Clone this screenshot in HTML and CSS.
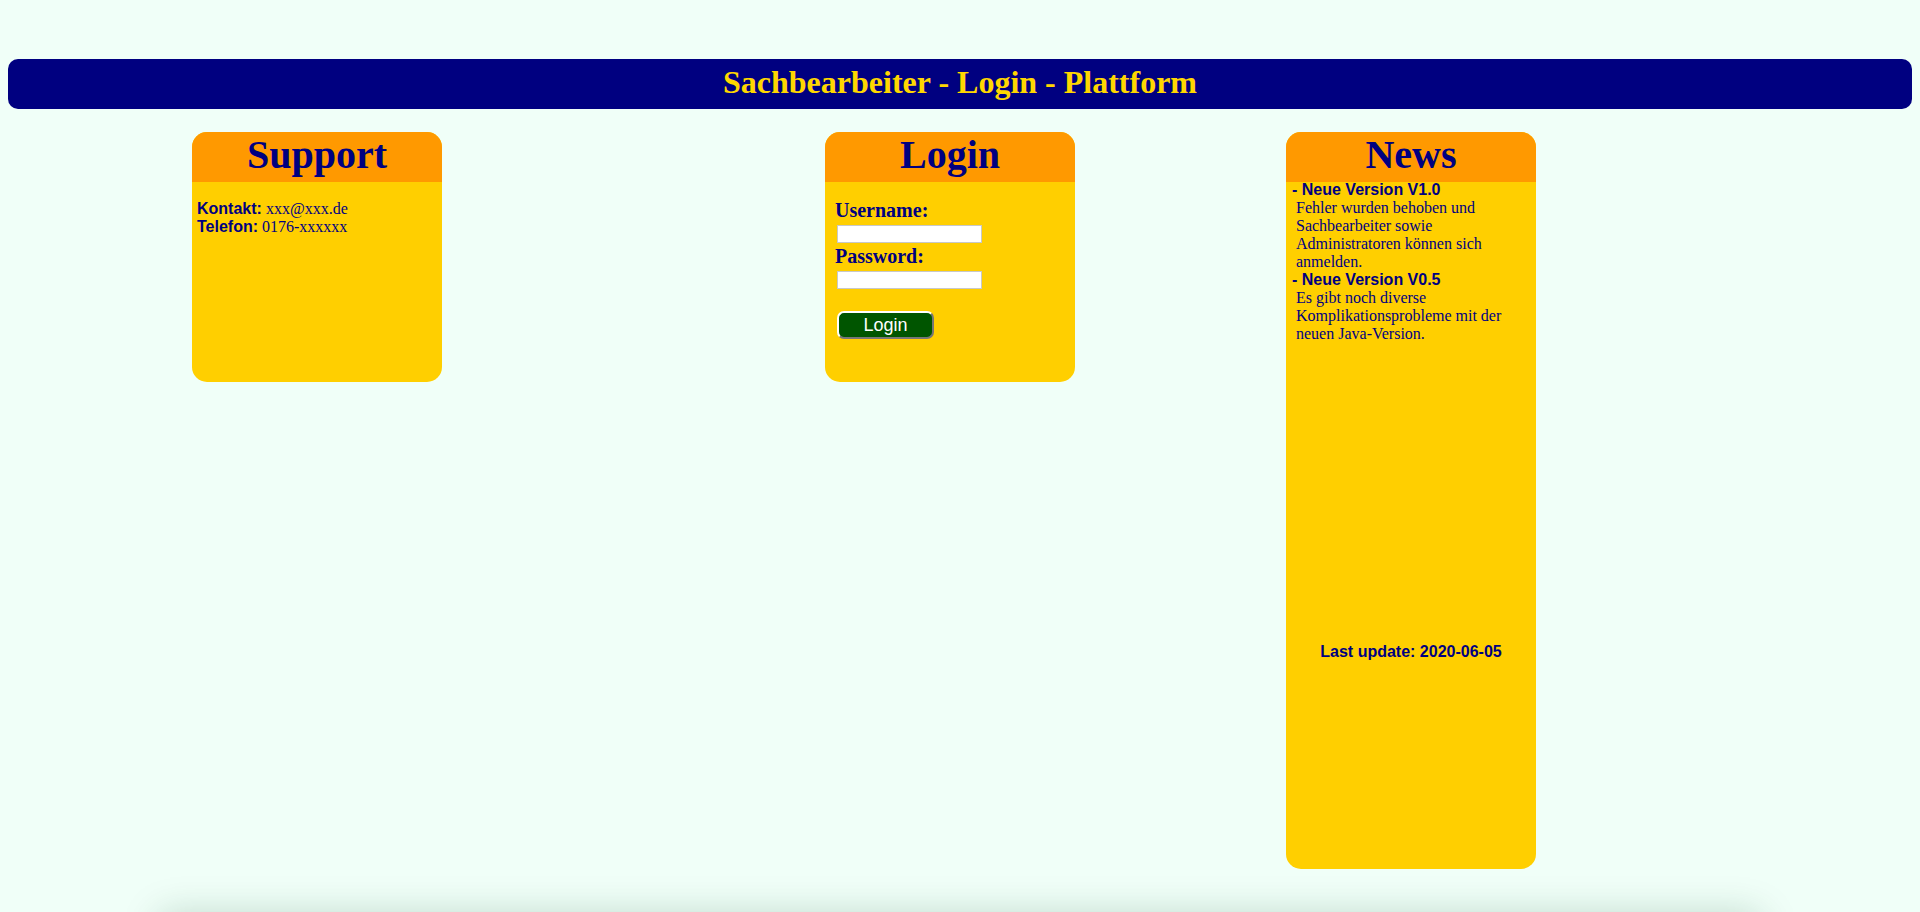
FILE: index.html
```html
<!DOCTYPE html>
<html lang="de">
<head>
<meta charset="utf-8">
<title>Sachbearbeiter - Login - Plattform</title>
<link rel="stylesheet" href="styles.css">
</head>
<body>
<div class="topbar">Sachbearbeiter - Login - Plattform</div>
<div class="row">
  <div class="panel panel-support">
    <div class="panel-title">Support</div>
    <div class="support-body">
      <div><span class="sans-b">Kontakt:</span> xxx@xxx.de</div>
      <div><span class="sans-b">Telefon:</span> 0176-xxxxxx</div>
    </div>
  </div>
  <div class="panel panel-login">
    <div class="panel-title">Login</div>
    <form class="login-body">
      <label class="login-label" for="user">Username:</label>
      <input class="login-input" id="user" type="text">
      <label class="login-label" for="pass">Password:</label>
      <input class="login-input" id="pass" type="password">
      <button class="login-btn" type="button">Login</button>
    </form>
  </div>
  <div class="panel panel-news">
    <div class="panel-title">News</div>
    <div class="news-body">
      <div class="news-head">- Neue Version V1.0</div>
      <div class="news-text">Fehler wurden behoben und Sachbearbeiter sowie Administratoren können sich anmelden.</div>
      <div class="news-head">- Neue Version V0.5</div>
      <div class="news-text">Es gibt noch diverse Komplikationsprobleme mit der neuen Java-Version.</div>
    </div>
    <div class="news-update">Last update: 2020-06-05</div>
  </div>
</div>
<div class="footer"></div>
</body>
</html>
```

FILE: styles.css
```css
html, body {
  background: #f0fff8;
}
body {
  margin: 8px;
  font-family: "Liberation Serif", "Times New Roman", serif;
  font-size: 16px;
  color: #000080;
}
.topbar {
  margin-top: 51px;
  height: 50px;
  box-sizing: border-box;
  padding-top: 5px;
  background: #000080;
  color: #ffd700;
  border-radius: 10px;
  text-align: center;
  font-weight: bold;
  font-size: 32px;
}
.row {
  display: flex;
  align-items: flex-start;
  margin-top: 23px;
  padding-left: 184px;
}
.panel {
  width: 250px;
  background: #ffcf00;
  border-radius: 15px;
  overflow: hidden;
  box-sizing: border-box;
}
.panel-support, .panel-login {
  height: 250px;
}
.panel-login {
  margin-left: 383px;
}
.panel-news {
  margin-left: 211px;
  height: 737px;
  display: flex;
  flex-direction: column;
}
.panel-title {
  height: 50px;
  flex: none;
  background: #ff9900;
  text-align: center;
  font-weight: bold;
  font-size: 40px;
  line-height: 46px;
  color: #000080;
}
.sans-b {
  font-family: "Liberation Sans", Arial, sans-serif;
  font-weight: bold;
  font-size: 16px;
}
.support-body {
  padding: 18px 5px 0;
}
.login-body {
  display: flex;
  flex-direction: column;
  align-items: flex-start;
  padding: 17px 10px 0;
  margin: 0;
}
.login-label {
  font-weight: bold;
  font-size: 20px;
  line-height: 23px;
}
.login-input {
  width: 145px;
  height: 18px;
  box-sizing: border-box;
  margin: 3px 0 2px 2px;
  padding: 0 2px;
  border: 1px solid #c8c8c8;
  background: #fff;
  font-size: 13px;
}
.login-btn {
  margin: 20px 0 0 2px;
  width: 97px;
  height: 28px;
  box-sizing: border-box;
  background: #005500;
  color: #fff;
  border: 2px solid;
  border-color: #ffffff #777777 #777777 #ffffff;
  border-radius: 7px;
  font-family: "Liberation Sans", Arial, sans-serif;
  font-size: 18px;
  line-height: 22px;
  padding: 0;
}
.news-body {
  padding: 0 6px;
  margin-top: -1px;
}
.news-head {
  font-family: "Liberation Sans", Arial, sans-serif;
  font-weight: bold;
  font-size: 16px;
}
.news-text {
  padding-left: 4px;
}
.news-update {
  margin-top: 300px;
  text-align: center;
  font-family: "Liberation Sans", Arial, sans-serif;
  font-weight: bold;
  font-size: 16px;
}
.footer {
  width: 1600px;
  height: 120px;
  margin: 46px auto 0;
  background: #f0fff8;
  box-shadow: 0 0 36px rgba(0, 70, 35, 0.22);
}
```
